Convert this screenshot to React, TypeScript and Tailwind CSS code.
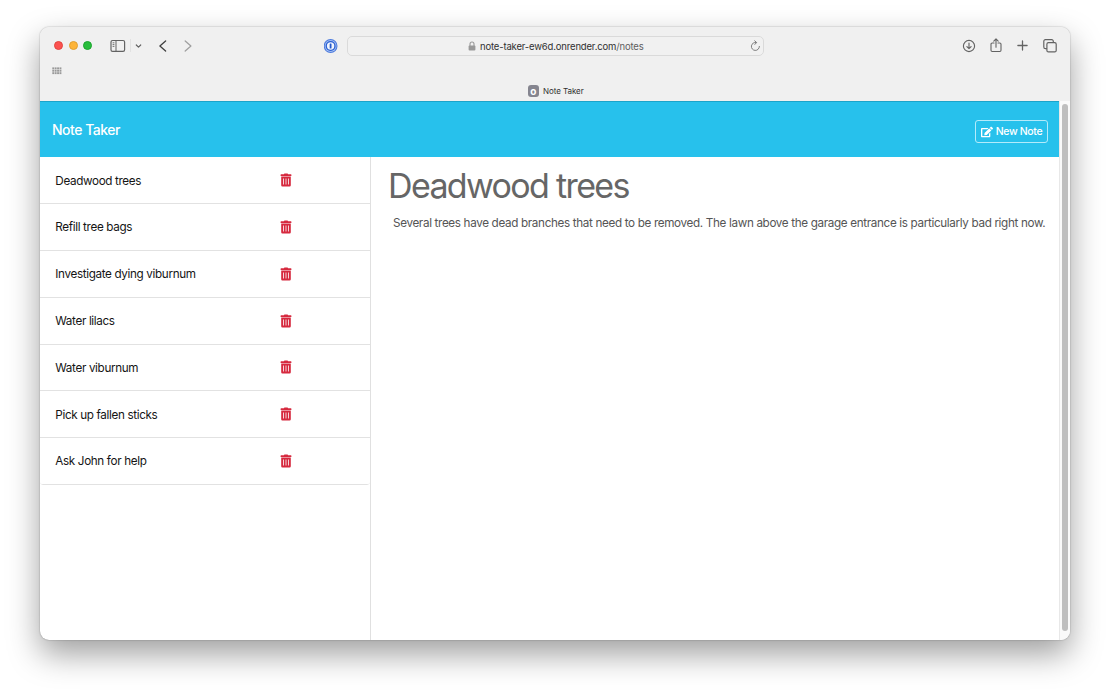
import { FaEdit } from "react-icons/fa";

const notes = [
  "Deadwood trees",
  "Refill tree bags",
  "Investigate dying viburnum",
  "Water lilacs",
  "Water viburnum",
  "Pick up fallen sticks",
  "Ask John for help",
];

function TrafficLights() {
  return (
    <div className="flex gap-[5.5px]">
      <span className="size-[9px] rounded-full border border-[#e2463f] bg-[#fc5250]" />
      <span className="size-[9px] rounded-full border border-[#e0a033] bg-[#fdb438]" />
      <span className="size-[9px] rounded-full border border-[#1ba52e] bg-[#28bd3c]" />
    </div>
  );
}

function TrashIcon() {
  return (
    <svg width="12" height="14" viewBox="0 0 12 14" fill="#d6293e">
      <path d="M3.9 1.3 4.4.5h3.2l.5.8h2.8q.5 0 .5.5v.9q0 .3-.4.3H1q-.4 0-.4-.3v-.9q0-.5.5-.5z" />
      <path
        fillRule="evenodd"
        d="M1.2 3.6h9.6v8.6q0 1.2-1.2 1.2H2.4q-1.2 0-1.2-1.2zM3.2 5.5v6h.8v-6zm2.4 0v6h.8v-6zm2.4 0v6h.8v-6z"
      />
    </svg>
  );
}

function Toolbar() {
  return (
    <div className="flex h-[37px] items-center pl-[14px] text-[#636363]">
      <TrafficLights />
      <svg className="ml-[18px]" width="16" height="14" viewBox="0 0 16 14" fill="none" stroke="currentColor">
        <rect x="1" y="1.5" width="13.6" height="10.8" rx="1.6" strokeWidth="1.2" />
        <path d="M6 1.5v10.8" strokeWidth="1" />
        <path d="M2.6 3.8h1.8M2.6 5.6h1.8M2.6 7.4h1.8" strokeWidth=".9" />
      </svg>
      <span className="ml-[4px] h-[13px] w-px bg-[#e2e2e2]" />
      <svg className="ml-[4px]" width="7" height="6" viewBox="0 0 7 6" fill="none" stroke="currentColor" strokeWidth="1.2" strokeLinecap="round" strokeLinejoin="round">
        <path d="M1.3 2 3.5 4.2 5.7 2" />
      </svg>
      <svg className="ml-[17px] text-[#404040]" width="8" height="12" viewBox="0 0 8 12" fill="none" stroke="currentColor" strokeWidth="1.3" strokeLinecap="round" strokeLinejoin="round">
        <path d="M6.6 1 .9 6l5.7 5" />
      </svg>
      <svg className="ml-[17px] text-[#a0a0a0]" width="8" height="12" viewBox="0 0 8 12" fill="none" stroke="currentColor" strokeWidth="1.3" strokeLinecap="round" strokeLinejoin="round">
        <path d="m1.2 1 5.7 5-5.7 5" />
      </svg>
      <svg className="ml-[132px]" width="14" height="14" viewBox="0 0 14 14">
        <circle cx="6.6" cy="7" r="6.9" fill="#4b7add" />
        <circle cx="6.6" cy="7" r="5.9" fill="#a5bff2" />
        <circle cx="6.6" cy="7" r="5" fill="#2b60d2" />
        <circle cx="6.6" cy="7" r="3.7" fill="#f1f5fe" />
        <rect x="5.7" y="4.5" width="1.8" height="5" rx=".6" fill="#2458ca" />
      </svg>
      <div className="ml-[9px] flex h-[20px] w-[417px] items-center rounded-[5px] border border-[#dadada] bg-[#f1f1f1]">
        <svg className="ml-[120px] shrink-0" width="8" height="10" viewBox="0 0 8 10">
          <path d="M2 5V3a2 2 0 0 1 4 0v2" fill="none" stroke="#999" strokeWidth="1.1" />
          <rect x=".6" y="4.4" width="6.8" height="5" rx="1" fill="#999" />
        </svg>
        <span className="mt-[2px] ml-[4px] w-[166px] whitespace-nowrap text-[9.5px] leading-none tracking-[-0.165px] text-[#303030]">
          note-taker-ew6d.onrender.com<span className="text-[#606060]">/notes</span>
        </span>
        <svg className="mt-px mr-[2.5px] ml-auto" width="11" height="12" viewBox="0 0 11 12" fill="none" stroke="#777" strokeWidth=".95" strokeLinecap="round" strokeLinejoin="round">
          <path d="M6.2 2.5A4 4 0 1 0 9.4 6.4M4.7.8l1.9 1.7-1.7 1.9" />
        </svg>
      </div>
      <div className="ml-auto flex items-center pr-[13.5px]">
        <svg width="14" height="14" viewBox="0 0 14 14" fill="none" stroke="currentColor" strokeWidth="1.15" strokeLinecap="round" strokeLinejoin="round">
          <circle cx="7" cy="7" r="5.6" />
          <path d="M7 4v5.6M4.9 7.6 7 9.7l2.1-2.1" />
        </svg>
        <svg className="mb-px ml-[14px]" width="12" height="15" viewBox="0 0 12 15" fill="none" stroke="currentColor" strokeWidth="1.1" strokeLinecap="round" strokeLinejoin="round">
          <path d="M4 5H2.2a1.2 1.2 0 0 0-1.2 1.2v6.1a1.2 1.2 0 0 0 1.2 1.2h7.6a1.2 1.2 0 0 0 1.2-1.2V6.2A1.2 1.2 0 0 0 9.8 5H8M6 9.3V1M3.8 3.1 6 .9l2.2 2.2" />
        </svg>
        <svg className="ml-[15px]" width="11" height="11" viewBox="0 0 11 11" fill="none" stroke="currentColor" strokeWidth="1.3" strokeLinecap="round">
          <path d="M5.5.9v9.2M.9 5.5h9.2" />
        </svg>
        <svg className="ml-[15px]" width="14" height="14" viewBox="0 0 14 14" fill="none" stroke="currentColor" strokeWidth="1.2" strokeLinejoin="round">
          <path d="M3.9 9.7H2.4A1.6 1.6 0 0 1 .8 8.1V2.3A1.6 1.6 0 0 1 2.4.7h6.3a1.6 1.6 0 0 1 1.6 1.6v1.3" />
          <rect x="3.9" y="3.7" width="9.3" height="9.2" rx="1.5" />
        </svg>
      </div>
    </div>
  );
}

function FavoritesIcon() {
  return (
    <svg width="10" height="8" viewBox="0 0 10 8" fill="#999">
      {[0, 1, 2].map((row) =>
        [0, 1, 2, 3].map((col) => (
          <rect key={`${row}-${col}`} x={0.3 + col * 2.4} y={0.4 + row * 2.4} width="1.9" height="1.9" />
        )),
      )}
    </svg>
  );
}

function BrowserChrome() {
  return (
    <div className="h-[74px] shrink-0 bg-[#f0f0f0]">
      <Toolbar />
      <div className="flex h-[14px] items-center pl-3">
        <FavoritesIcon />
      </div>
      <div className="flex h-[23px] items-center pt-[3px] pl-[487.5px]">
        <span className="flex size-[11.5px] items-center justify-center rounded-[3px] bg-[#85858f] pb-px text-[10px] leading-none font-bold text-white">
          o
        </span>
        <span className="ml-[4px] text-[8px] leading-none tracking-[-0.06px] text-[#303030]">Note Taker</span>
      </div>
    </div>
  );
}

export default function App() {
  return (
    <div className="flex h-[693px] w-[1110px] overflow-hidden bg-white pt-[27px] pl-[40px] font-['Inter',sans-serif]">
      <div className="flex h-[613px] w-[1030px] flex-col overflow-hidden rounded-[9px] bg-white shadow-[0_0_1.5px_0_rgba(0,0,0,0.42),0_14px_32px_rgba(0,0,0,0.38)]">
        <BrowserChrome />
        <div className="flex min-h-0 flex-1">
          <div className="flex w-[1019px] shrink-0 flex-col">
            <header className="flex h-[56.4px] shrink-0 items-center justify-between border-t border-[#1ba4ca] bg-[#27c1ec] pr-[11px] pl-[12px] text-white">
              <h1 className="text-[14px] leading-none font-medium tracking-[-0.48px]">Note Taker</h1>
              <button className="mt-[4px] flex h-[23px] w-[73px] items-center justify-center gap-[3px] rounded-[3px] border border-[#b4ebfb] text-[10.5px] leading-none font-medium tracking-[-0.34px] whitespace-nowrap">
                <FaEdit className="size-[12px] shrink-0" />
                <span className="pt-[2px]">New Note</span>
              </button>
            </header>
            <div className="flex min-h-0 flex-1">
              <div className="w-[331px] shrink-0 border-r border-[#e0e0e0]">
                <ul className="overflow-hidden rounded-b-[3px]">
                  {notes.map((note) => (
                    <li key={note} className="flex h-[46.8px] items-center border-b border-[#e2e2e2] pl-[15.3px] text-[11.7px] text-[#151515] last:rounded-b-[3px]">
                      <span className="w-[225.2px] pt-[2px] tracking-[-0.35px]">{note}</span>
                      <TrashIcon />
                    </li>
                  ))}
                </ul>
              </div>
              <main className="min-w-0 flex-1 pl-[17px] text-[#666]">
                <h2 className="mt-[8px] text-[34px] leading-[42px] font-[430] tracking-[-1.65px]">Deadwood trees</h2>
                <p className="mt-[8px] pl-[5px] text-[11.7px] leading-[16px] tracking-[-0.345px] whitespace-nowrap text-[#555]">
                  Several trees have dead branches that need to be removed. The lawn above the garage entrance is
                  particularly bad right now.
                </p>
              </main>
            </div>
          </div>
          <div className="flex flex-1 justify-center border-l border-[#e8e8e8] bg-[#fafafa] pt-[3px] pb-[9px]">
            <div className="w-[6px] rounded-full bg-[#bfbfbf]" />
          </div>
        </div>
      </div>
    </div>
  );
}
